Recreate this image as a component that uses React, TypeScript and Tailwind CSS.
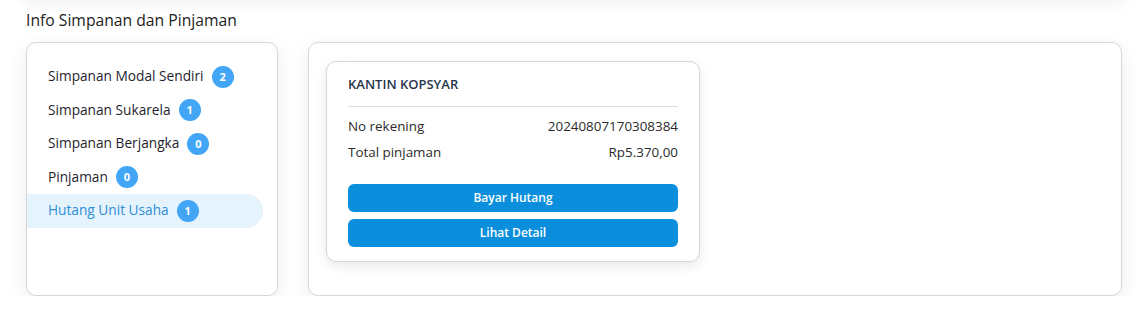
import React, { useState } from 'react';

const menu = [
  { label: 'Simpanan Modal Sendiri', count: 2 },
  { label: 'Simpanan Sukarela', count: 1 },
  { label: 'Simpanan Berjangka', count: 0 },
  { label: 'Pinjaman', count: 0 },
  { label: 'Hutang Unit Usaha', count: 1 },
];

const App = () => {
  const [active, setActive] = useState(4);

  return (
    <div className="min-h-screen bg-white font-['Open_Sans',sans-serif] text-[#222]">
      {/* bayangan kartu di atas */}
      <div className="mx-[20px] -mt-[100px] h-[100px] rounded-xl bg-white shadow-[0_2px_16px_rgba(0,0,0,0.07)]" />

      <div className="px-[26px]">
        <h2 className="mt-[9px] text-[15.7px] leading-[22px] text-[#222]">Info Simpanan dan Pinjaman</h2>

        <div className="mt-[11px] flex gap-[30px]">
          {/* Menu kiri */}
          <div className="h-[254px] w-[252px] shrink-0 rounded-[10px] border border-[#d6d6d6] bg-white pt-[17px] shadow-[0_6px_20px_rgba(0,0,0,0.08)]">
            {menu.map((m, i) => (
              <button
                key={m.label}
                onClick={() => setActive(i)}
                className={`flex h-[33.5px] w-[236px] items-center gap-[8px] rounded-r-full pl-[21px] text-left text-[13.7px] ${
                  active === i ? 'bg-[#e5f3fc] text-[#2f8fd8]' : 'text-[#1e1e2d]'
                }`}
              >
                <span>{m.label}</span>
                <span className="flex h-[22px] w-[22px] items-center justify-center rounded-full bg-[#42a5f5] text-[11px] font-bold text-white">
                  {m.count}
                </span>
              </button>
            ))}
          </div>

          {/* Konten kanan */}
          <div className="h-[254px] flex-1 rounded-[10px] border border-[#d6d6d6] bg-white pl-[17px] pt-[18px] shadow-[0_6px_20px_rgba(0,0,0,0.08)]">
            <div className="w-[374px] rounded-[10px] border border-[#d6d6d6] bg-white px-[21px] pb-[14px] pt-[12px] shadow-[0_4px_12px_rgba(0,0,0,0.09)]">
              <div className="text-[13px] font-semibold leading-[20px] text-[#26364a]">KANTIN KOPSYAR</div>
              <div className="mt-[12px] border-t border-[#dedede]" />
              <div className="mt-[9px] flex justify-between text-[13.4px] leading-[20px] text-[#2b2b2b]">
                <span>No rekening</span>
                <span>20240807170308384</span>
              </div>
              <div className="mt-[6px] flex justify-between text-[13.4px] leading-[20px] text-[#2b2b2b]">
                <span>Total pinjaman</span>
                <span>Rp5.370,00</span>
              </div>
              <button className="mt-[22px] flex h-[28px] w-full items-center justify-center rounded-[6px] bg-[#0b8fdc] text-[12px] font-semibold text-white">
                Bayar Hutang
              </button>
              <button className="mt-[7px] flex h-[28px] w-full items-center justify-center rounded-[6px] bg-[#0b8fdc] text-[12px] font-semibold text-white">
                Lihat Detail
              </button>
            </div>
          </div>
        </div>
      </div>
    </div>
  );
};

export default App;
